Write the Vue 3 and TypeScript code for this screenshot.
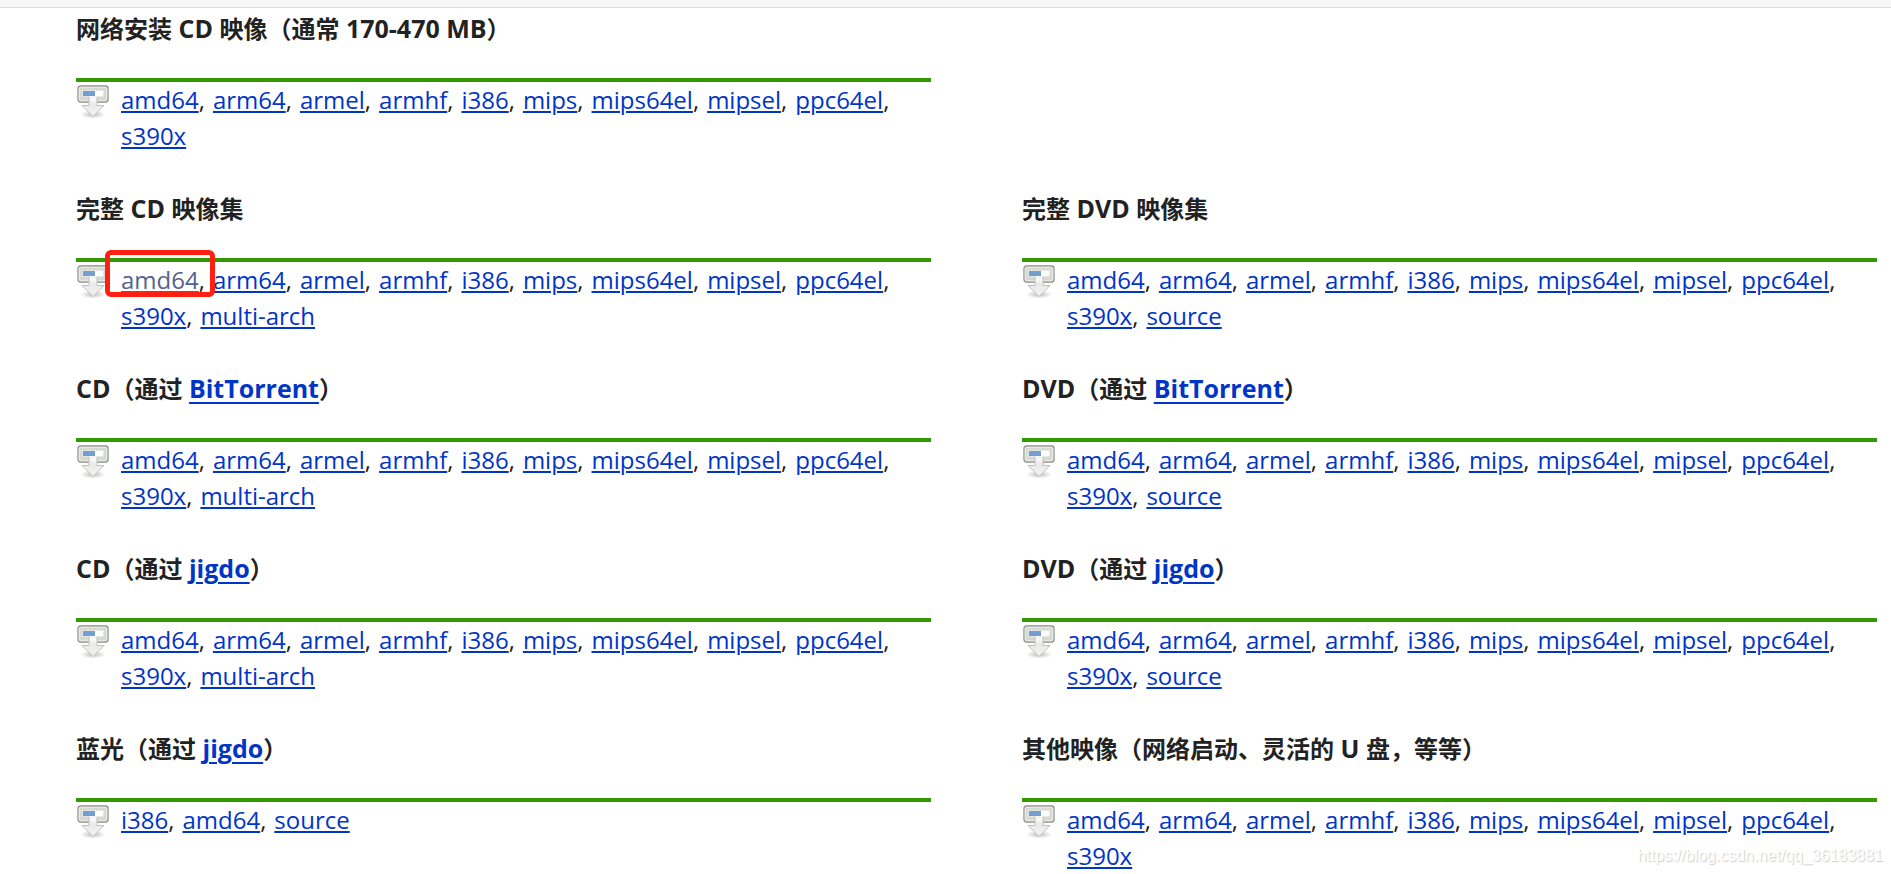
<script setup lang="ts">
interface Arch {
  name: string
  visited?: boolean
}
interface Section {
  before: string
  link?: string
  after?: string
  items: Arch[]
  solo?: boolean
}

const toItems = (names: string): Arch[] => names.split(' ').map((name) => ({ name }))
const base = 'amd64 arm64 armel armhf i386 mips mips64el mipsel ppc64el s390x'
const cd = `${base} multi-arch`
const dvd = `${base} source`

const sections: Section[] = [
  { before: '网络安装 CD 映像（通常 170-470 MB）', items: toItems(base), solo: true },
  {
    before: '完整 CD 映像集',
    items: toItems(cd).map((item, i) => ({ ...item, visited: i === 0 })),
  },
  { before: '完整 DVD 映像集', items: toItems(dvd) },
  { before: 'CD（通过 ', link: 'BitTorrent', after: '）', items: toItems(cd) },
  { before: 'DVD（通过 ', link: 'BitTorrent', after: '）', items: toItems(dvd) },
  { before: 'CD（通过 ', link: 'jigdo', after: '）', items: toItems(cd) },
  { before: 'DVD（通过 ', link: 'jigdo', after: '）', items: toItems(dvd) },
  { before: '蓝光（通过 ', link: 'jigdo', after: '）', items: toItems('i386 amd64 source') },
  { before: '其他映像（网络启动、灵活的 U 盘，等等）', items: toItems(base) },
]

// Latin runs are set one pixel larger than the Chinese characters around them.
const runs = (text: string) =>
  text
    .split(/([A-Za-z0-9 -]+)/)
    .filter(Boolean)
    .map((part) => ({ part, latin: /^[A-Za-z0-9 -]+$/.test(part) }))
</script>

<template>
  <div class="page">
    <div class="strip"></div>
    <main class="grid">
      <section v-for="(s, i) in sections" :key="i" class="section" :class="{ solo: s.solo }">
        <h3 class="title"><span v-for="(r, k) in runs(s.before)" :key="k" :class="{ latin: r.latin }">{{ r.part }}</span><a v-if="s.link" class="latin" href="#">{{ s.link }}</a>{{ s.after }}</h3>
        <div class="body">
          <svg class="icon" viewBox="0 0 34 34" aria-hidden="true">
            <defs>
              <radialGradient :id="`shade${i}`">
                <stop offset="0" stop-color="#888" stop-opacity=".55" />
                <stop offset="1" stop-color="#888" stop-opacity="0" />
              </radialGradient>
              <linearGradient :id="`arrow${i}`" x1="0" y1="0" x2="0" y2="1">
                <stop offset="0" stop-color="#ffffff" />
                <stop offset=".35" stop-color="#e9e9e7" />
                <stop offset="1" stop-color="#f4f4f3" />
              </linearGradient>
            </defs>
            <ellipse cx="17" cy="29.5" rx="13" ry="4" :fill="`url(#shade${i})`" />
            <rect x="2" y="1" width="30" height="16" rx="2.5" fill="#d7d9d3" stroke="#8d8f8a" stroke-width="1.3" />
            <rect x="3.2" y="2.2" width="27.6" height="13.6" rx="1.5" fill="none" stroke="#eeefec" />
            <rect x="6.5" y="5.5" width="21" height="6" fill="#fff" stroke="#e6e7e4" />
            <rect x="7" y="6" width="12" height="5" fill="#729fcf" />
            <path d="M13 12.5h8v8h7L17 31.5 6 20.5h7z" :fill="`url(#arrow${i})`" stroke="#bfc0bd" stroke-linejoin="round" />
            <path d="M13.5 12h7" stroke="#fff" stroke-width="1.5" />
          </svg>
          <ul class="links">
            <li v-for="(item, n) in s.items" :key="item.name" :class="{ marked: item.visited }">
              <a href="#" :class="{ visited: item.visited }">{{ item.name }}</a>{{ n < s.items.length - 1 ? ',' : '' }}
            </li>
          </ul>
        </div>
      </section>
    </main>
    <div class="watermark">https://blog.csdn.net/qq_36183881</div>
  </div>
</template>

<style>
body {
  margin: 0;
  background: #fff;
}
</style>

<style scoped>
.page {
  position: relative;
  color: #222;
  font-family: "Open Sans", "Noto Sans CJK SC", sans-serif;
  font-size: 24px;
  line-height: 36px;
}
.strip {
  height: 7px;
  background: #f8f8f8;
  border-bottom: 1px solid #dcdcdc;
}
.grid {
  display: grid;
  grid-template-columns: 1fr 1fr;
  column-gap: 91px;
  padding: 0 14px 0 76px;
}
.section {
  padding-top: 36px;
}
.section.solo {
  grid-column: 1 / -1;
  width: calc(50% - 46px);
  padding-top: 2px;
}
.title {
  height: 36px;
  margin: 0 0 32px;
  font-size: 24px;
  line-height: 36px;
  font-weight: 700;
  white-space: pre-wrap;
}
.latin {
  font-size: 25px;
}
a {
  color: #0035c7;
  text-decoration: underline;
  text-decoration-thickness: 2px;
  text-underline-offset: 2px;
}
.title a {
  text-underline-offset: 4px;
}
a.visited {
  color: #54638c;
}
.body {
  display: flex;
  gap: 11px;
  border-top: 4px solid #339900;
}
.icon {
  flex: none;
  width: 34px;
  height: 34px;
  margin-top: 3px;
}
.links {
  display: flex;
  flex: 1;
  flex-wrap: wrap;
  column-gap: 8px;
  margin: 0;
  padding: 0;
  list-style: none;
}
.marked {
  position: relative;
}
.marked::after {
  content: "";
  position: absolute;
  top: -12px;
  right: -10px;
  bottom: 1px;
  left: -16px;
  border: 5px solid #ff2012;
  border-radius: 6px;
}
.watermark {
  position: absolute;
  right: 8px;
  bottom: 8px;
  color: #fff;
  font-family: "Liberation Sans", Arial, sans-serif;
  font-size: 16px;
  line-height: 20px;
  text-shadow: 1px 1px 1px #ccc;
}
</style>
